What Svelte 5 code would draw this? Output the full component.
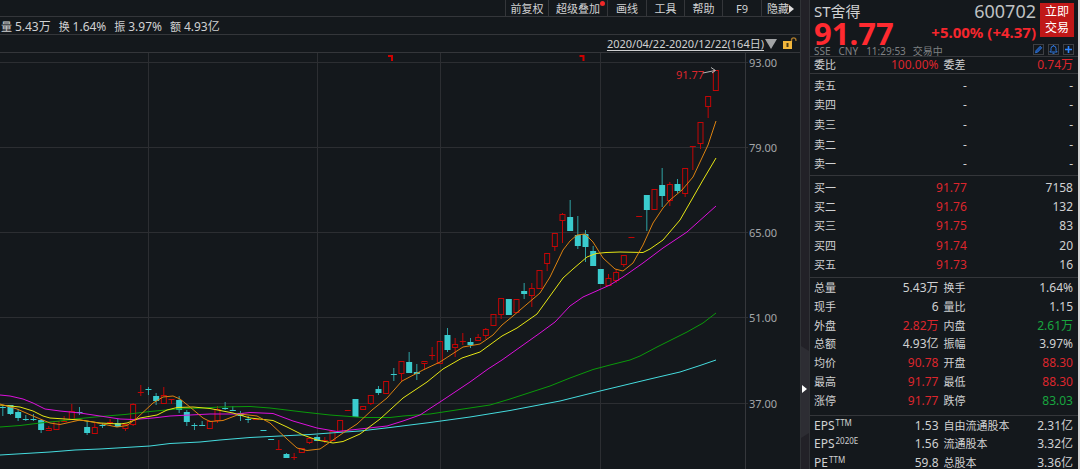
<script lang="ts">
  type Candle = [kind: string, high: number, top: number, bottom: number, low: number];

  const menu = ["前复权", "超级叠加", "画线", "工具", "帮助", "F9", "隐藏"];
  const widths = [43, 59, 39, 38, 38, 39, 38];

  const summary = [
    ["量", "5.43万"],
    ["换", "1.64%"],
    ["振", "3.97%"],
    ["额", "4.93亿"],
  ];

  const sells = ["卖五", "卖四", "卖三", "卖二", "卖一"];
  const buys = [
    ["买一", "91.77", "7158"],
    ["买二", "91.76", "132"],
    ["买三", "91.75", "83"],
    ["买四", "91.74", "20"],
    ["买五", "91.73", "16"],
  ];

  // label, value, tone, label, value, tone
  const stats = [
    ["总量", "5.43万", "", "换手", "1.64%", ""],
    ["现手", "6", "", "量比", "1.15", ""],
    ["外盘", "2.82万", "up", "内盘", "2.61万", "down"],
    ["总额", "4.93亿", "", "振幅", "3.97%", ""],
    ["均价", "90.78", "up", "开盘", "88.30", "up"],
    ["最高", "91.77", "up", "最低", "88.30", "up"],
    ["涨停", "91.77", "up", "跌停", "83.03", "down"],
  ];

  // label, superscript, value, label, value
  const ratios = [
    ["EPS", "TTM", "1.53", "自由流通股本", "2.31亿"],
    ["EPS", "2020E", "1.56", "流通股本", "3.32亿"],
    ["PE", "TTM", "59.8", "总股本", "3.36亿"],
  ];

  const levels = [
    [62.5, "93.00"],
    [147.5, "79.00"],
    [232.5, "65.00"],
    [317.5, "51.00"],
    [403.5, "37.00"],
  ] as [number, string][];
  const months = [148.5, 317.5, 440.5, 600.5];

  // u = hollow red, d = filled teal
  const candles: Candle[] = [
    ["d", 406, 407, 408, 416], ["d", 405, 405, 414, 415], ["d", 409, 412, 418, 421],
    ["d", 415, 419, 420, 421], ["d", 414, 419, 420, 421], ["d", 419, 420, 430, 433],
    ["u", 426, 428, 430, 430], ["u", 421, 421, 429, 429], ["u", 416, 421, 421, 422],
    ["u", 404, 411, 419, 419], ["d", 407, 412, 413, 415], ["d", 421, 427, 433, 435],
    ["u", 423, 427, 433, 433], ["d", 423, 425, 426, 428], ["u", 419, 422, 423, 426],
    ["d", 419, 423, 427, 427], ["u", 424, 424, 428, 431], ["u", 403, 404, 424, 426],
    ["u", 385, 392, 392, 396], ["d", 387, 389, 390, 395], ["d", 393, 396, 401, 405],
    ["u", 387, 395, 403, 403], ["u", 399, 399, 399, 404], ["d", 396, 400, 410, 413],
    ["d", 410, 412, 422, 426], ["d", 423, 425, 426, 430], ["d", 421, 425, 426, 426],
    ["u", 420, 421, 428, 428], ["u", 406, 409, 420, 423], ["d", 402, 408, 409, 410],
    ["d", 406, 410, 411, 411], ["d", 411, 413, 416, 421], ["d", 416, 419, 420, 423],
    ["u", 419, 419, 419, 419], ["d", 430, 430, 431, 431], ["d", 439, 439, 440, 440],
    ["u", 440, 449, 449, 449], ["d", 453, 454, 458, 458], ["u", 453, 457, 457, 460],
    ["u", 448, 448, 452, 452], ["u", 438, 438, 442, 444], ["d", 435, 437, 441, 441],
    ["u", 437, 440, 440, 443], ["u", 431, 431, 440, 440], ["u", 420, 420, 431, 431],
    ["u", 410, 410, 410, 410], ["d", 399, 399, 417, 417], ["u", 406, 406, 409, 409],
    ["u", 395, 395, 403, 405], ["d", 386, 389, 393, 395], ["u", 381, 381, 393, 393],
    ["d", 368, 374, 375, 381], ["u", 361, 361, 373, 381], ["d", 352, 362, 373, 373],
    ["d", 364, 372, 374, 380], ["u", 361, 361, 363, 370], ["u", 347, 355, 355, 360],
    ["u", 341, 341, 363, 363], ["d", 328, 335, 350, 352], ["u", 338, 344, 347, 357],
    ["u", 333, 341, 342, 345], ["d", 338, 342, 345, 348], ["u", 334, 337, 340, 341],
    ["u", 328, 329, 335, 339], ["u", 314, 314, 325, 325], ["u", 298, 298, 314, 319],
    ["d", 299, 299, 315, 315], ["u", 299, 299, 312, 313], ["d", 283, 291, 294, 299],
    ["u", 283, 288, 295, 307], ["u", 270, 270, 288, 288], ["u", 253, 253, 263, 271],
    ["u", 233, 233, 246, 251], ["u", 213, 214, 220, 243], ["d", 200, 217, 231, 231],
    ["d", 216, 235, 246, 249], ["d", 230, 234, 247, 262], ["d", 246, 251, 266, 266],
    ["d", 269, 269, 284, 284], ["u", 274, 278, 285, 286], ["u", 269, 272, 280, 283],
    ["u", 255, 255, 264, 267], ["u", 237, 237, 237, 237], ["u", 216, 216, 216, 216],
    ["d", 195, 195, 210, 231], ["u", 189, 189, 209, 209], ["d", 168, 185, 196, 207],
    ["u", 182, 184, 200, 206], ["d", 179, 184, 191, 193], ["u", 168, 168, 193, 197],
    ["u", 146, 146, 146, 170], ["u", 122, 122, 143, 149], ["u", 96, 96, 106, 118],
    ["u", 70, 70, 90, 90],
  ];
  const step = 7.667;
  const cx = (i: number) => 2.8 + i * step;

  const averages = [
    { color: "#45dcde", points: "0,455 25,453.5 50,452 75,450 100,449 125,447.5 150,446 170,443.5 200,442 220,440 250,437.5 280,436 310,434.5 330,433 360,431 390,427.5 430,422.5 470,417 510,410.5 560,401 600,391 650,379 680,372 700,365.5 716,360" },
    { color: "#0a9a0a", points: "0,427 20,425.5 40,423 60,421 75,419 100,416.5 125,414.5 150,411.5 177,409 203,408 220,407 250,406.5 270,408 303,412 330,415 350,416.5 363,417.5 390,417.5 403,416 430,414 463,409 490,405 510,399 550,386 570,378 593,369.5 610,365 630,360 640,356 657,347 687,332 703,323 716,313" },
    { color: "#dc10dc", points: "0,395 10,396 23,399 33,403 45,409 60,411 80,413 100,416 120,419 133,419.5 153,418 170,416 210,414 237,414 250,412.5 273,413.5 293,421 317,428 337,431.5 360,429 387,426 403,421 420,415 443,400 470,382 488,369 502,360 540,333 555,322 570,306 583,297 610,285 623,277 643,263 663,248 687,232 716,206" },
    { color: "#e6e614", points: "0,405 20,407 33,411 43,416 50,418 80,420 100,423 120,424 127,423 140,418 157,415 167,410 177,407.5 193,407 210,408.5 233,413 250,418 273,420.5 287,427 303,435 317,440 333,443 343,441.5 360,434 380,419 403,398 427,382 443,369 462,358 480,352 502,336 517,328 537,314 563,278 573,269 587,257 596,253.5 606,252.5 620,252 643,252.5 650,249 663,240 680,220 703,180 716,158" },
    { color: "#dc8210", points: "0,404 17,409 33,416 50,423 60,424.5 80,420 93,422 117,427 127,425.5 137,418 153,403 163,397 173,396 180,399 190,407 203,418 210,421.5 223,420.5 240,414 257,416 270,423 287,439 297,448 307,450.5 320,449 333,440 343,433 357,424 372,410 387,398 402,381 423,370 440,362 463,347 480,344 493,335 502,325 513,316 540,293 550,277 563,250 570,241 577,235 585,234 593,242 603,258 615,269 623,271 633,263 643,245 653,223 663,208 670,200 682,190 693,177 708,145 716,121" },
  ];
</script>

<div class="terminal">
  <main class="chart-pane">
    <nav class="toolbar">
      {#each menu as item, i}
        <button style="width: {widths[i]}px" class:has-dot={i === 1}>
          {item}{#if i === 6}<svg width="5" height="8" viewBox="0 0 5 8" aria-hidden="true"><path d="M0 0 5 4 0 8z" fill="#ddd" /></svg>{/if}
        </button>
      {/each}
    </nav>

    <div class="summary">
      {#each summary as [label, value]}
        <span>{label} <b>{value}</b></span>
      {/each}
    </div>

    <div class="range">
      <button class="dates">2020/04/22-2020/12/22(164日)</button>
      <svg width="12" height="10" viewBox="0 0 12 10" aria-hidden="true"><path d="M0 0H12L6 10z" fill="#a2a4a6" /></svg>
      <button class="lock" aria-label="解锁">
        <svg width="14" height="13" viewBox="0 0 14 13">
          <path d="M8.5 5V3a2.2 2.2 0 0 1 4.4 0v1" fill="none" stroke="#a9782a" stroke-width="1.3" />
          <rect y="4" width="9" height="8" fill="#f0b53c" />
          <path d="M3.5 6h2v4h-2z" fill="#4d3a14" />
        </svg>
      </button>
    </div>

    <svg class="chart" viewBox="0 53 800 416" role="img" aria-label="K线图">
      <g class="grid">
        {#each levels as [y]}
          <path d="M0 {y}H748" />
        {/each}
        {#each months as x}
          <path d="M{x} 53V469" />
        {/each}
      </g>
      <path class="axis" d="M745.5 53V469" />

      {#each candles as [kind, high, top, bottom, low], i}
        {#if kind === "d"}
          <g class="fall">
            <path d="M{cx(i)} {high}V{low}" />
            <rect x={cx(i) - 3} y={top} width="6" height={bottom - top} />
          </g>
        {:else}
          <g class="rise">
            {#if high < top}<path d="M{cx(i)} {high}V{top}" />{/if}
            {#if low > bottom}<path d="M{cx(i)} {bottom}V{low}" />{/if}
            {#if bottom - top < 2}
              <path d="M{cx(i) - 3} {top + 0.5}h6" />
            {:else}
              <rect x={cx(i) - 2.5} y={top + 0.5} width="5" height={bottom - top} />
            {/if}
          </g>
        {/if}
      {/each}

      {#each averages as line}
        <polyline points={line.points} stroke={line.color} />
      {/each}

      <path class="flag" d="M388 56h4v5M579.5 56h4v5" />
      <text class="peak" x="676" y="79">91.77</text>
      <path class="pointer" d="M703 73 715 70.500M711 67.500 715.500 70.500 712 73" />
      {#each levels as [y, label]}
        <text class="level" x="749" y={y + 4}>{label}</text>
      {/each}
    </svg>
  </main>

  <div class="splitter">
    <button aria-label="收起"></button>
  </div>

  <aside class="quote">
    <header>
      <div class="name">
        <h1>ST舍得</h1>
        <strong>91.77</strong>
      </div>
      <div class="change">
        <span class="code">600702</span>
        <b>+5.00% (+4.37)</b>
      </div>
      <button class="trade">立即<br />交易</button>
    </header>
    <div class="status">
      <span>SSE</span><span>CNY</span><span>11:29:53</span><span>交易中</span>
      <div class="tools">
        <button aria-label="编辑"><svg width="9" height="9" viewBox="0 0 9 9"><path d="M1.500 7.800 2 5.600 6.200 1.200 7.800 2.800 3.600 7.200z" fill="#1d4f9e" stroke="#2f78e0" stroke-width=".8" /></svg></button>
        <button aria-label="提醒"><svg width="9" height="9" viewBox="0 0 9 9"><path d="M.8 7h7.400L7 5.500V3.500a2.500 2.500 0 0 0-5 0v2zM3.500 8.300h2M4.500 0v1" fill="none" stroke="#2f78e0" /></svg></button>
        <button aria-label="添加"><svg width="9" height="9" viewBox="0 0 9 9"><path d="M4.500 1v7M1 4.500h7" stroke="#2f86ff" stroke-width="1.600" /></svg></button>
      </div>
    </div>

    <table class="pairs ratio">
      <tbody>
        <tr><th>委比</th><td class="up">100.00%</td><th>委差</th><td class="up">0.74万</td></tr>
      </tbody>
    </table>

    <table class="book sell">
      <tbody>
        {#each sells as label}
          <tr><th>{label}</th><td>-</td><td>-</td></tr>
        {/each}
      </tbody>
    </table>

    <table class="book buy">
      <tbody>
        {#each buys as [label, price, volume]}
          <tr><th>{label}</th><td class="up">{price}</td><td>{volume}</td></tr>
        {/each}
      </tbody>
    </table>

    <table class="pairs stats">
      <tbody>
        {#each stats as [l1, v1, t1, l2, v2, t2]}
          <tr><th>{l1}</th><td class={t1}>{v1}</td><th>{l2}</th><td class={t2}>{v2}</td></tr>
        {/each}
      </tbody>
    </table>

    <table class="pairs basics">
      <tbody>
        {#each ratios as [l1, sup, v1, l2, v2]}
          <tr><th>{l1}<sup>{sup}</sup></th><td>{v1}</td><th>{l2}</th><td>{v2}</td></tr>
        {/each}
      </tbody>
    </table>
  </aside>
</div>

<style>
  :global(body) { background: #14181c; overflow: hidden; }

  .terminal {
    display: flex;
    min-height: 100vh;
    background: #14181c;
    color: #d0d1d2;
    font-family: "Noto Sans", "Noto Sans CJK SC", sans-serif;
    font-size: 11px;
    line-height: 16px;
    border-right: 2px solid #d4d4d4;
    box-sizing: border-box;
  }
  button {
    padding: 0; border: 0; background: none;
    color: inherit; font: inherit; cursor: pointer;
  }

  .chart-pane { flex: 1; min-width: 0; }

  .toolbar {
    display: flex; justify-content: flex-end;
    height: 16px; padding-right: 1px;
    line-height: 17px;
    border-bottom: 1px solid #34363a;
  }
  .toolbar button {
    position: relative;
    box-sizing: border-box;
    border-left: 1px solid #34363a;
    white-space: nowrap;
  }
  .has-dot::after {
    content: "";
    position: absolute; top: 1px; right: 2px;
    width: 5px; height: 5px; border-radius: 50%;
    background: #f02828;
  }

  .summary {
    display: flex; gap: 8px;
    height: 17px; padding-left: 1px;
    line-height: 19px;
    border-bottom: 1px solid #34363a;
  }
  .summary b { font-size: 12px; font-weight: 400; }

  .range {
    display: flex; align-items: center; justify-content: flex-end;
    height: 17px; padding-right: 3px;
    border-bottom: 1px solid #34363a;
  }
  .dates { text-decoration: underline; text-underline-offset: 2px; margin-right: 1px; }
  .lock { display: flex; margin-left: 6px; }

  .chart { display: block; width: 100%; }
  .grid path { stroke: #2c2e32; }
  .axis { stroke: #35373b; }
  .fall path { stroke: #2fa3a5; }
  .fall rect { fill: #3accce; }
  .rise path, .rise rect { fill: none; stroke: #c40606; }
  polyline { fill: none; stroke-width: 1; }
  .flag { fill: none; stroke: #d00000; stroke-width: 2; }
  .pointer { fill: none; stroke: #b4b4b4; }
  .chart text { font-size: 11px; fill: #a4a7aa; }
  .chart .peak { fill: #dc262d; }

  .splitter {
    display: flex; align-items: flex-end;
    width: 8px;
    background: #222127;
    border-left: 1px solid #303236;
  }
  .splitter button {
    display: flex; align-items: center;
    width: 8px; height: 92px; margin-bottom: 34px;
    background: #2d2d33;
    clip-path: polygon(0 0, 100% 5px, 100% 87px, 0 100%);
  }
  .splitter button::after {
    content: "";
    margin: -6px 0 0 1px;
    border-left: 5px solid #fff;
    border-top: 4px solid transparent;
    border-bottom: 4px solid transparent;
  }

  .quote {
    width: 268px;
    border-left: 1px solid #303236;
  }
  header { display: flex; height: 44px; padding: 0 4px; }
  .name { flex: 1; }
  h1 { margin: 0; font-size: 15px; font-weight: 400; line-height: 22px; }
  .name strong {
    display: block;
    font-size: 31px; line-height: 22px;
    color: #ff2a30;
  }
  .change {
    display: flex; flex-direction: column; align-items: flex-end;
    margin-right: 4px;
    color: #f5262d;
    font-size: 15px; line-height: 18px;
  }
  .code { color: #bfc1c3; font-size: 18px; line-height: 23px; }
  .trade {
    width: 34px; height: 34px; margin-top: 3px;
    background: #c01818;
    color: #fff;
    font-size: 12px; line-height: 16px;
  }

  .status {
    display: flex; gap: 7px;
    height: 12px; padding: 0 4px;
    border-bottom: 1px solid #34363a;
    color: #7f8183;
    font-size: 10px; line-height: 14px;
  }
  .status > span:nth-child(-n + 2) { margin-right: 1px; }
  .tools { display: flex; align-items: flex-start; gap: 4px; margin-left: auto; }
  .tools button {
    display: flex;
    border: 1px solid #3e4044;
  }

  table {
    width: 100%;
    padding: 0 5px 0 4px;
    border-spacing: 0;
    border-bottom: 1px solid #34363a;
    table-layout: fixed;
    box-sizing: border-box;
    font-size: 12px; line-height: 16px;
  }
  th, td { padding: 0; text-align: right; white-space: nowrap; }
  th { text-align: left; font-size: 11px; font-weight: 400; }
  .up { color: #dc262d; }
  .down { color: #18a53f; }

  .book th { width: 20%; }
  .book td:nth-child(2) { width: 39%; }
  .pairs th:nth-child(1) { width: 20%; }
  .pairs td:nth-child(2) { width: 29%; }
  .pairs th:nth-child(3) { width: 28%; padding-left: 5px; }
  .pairs td:nth-child(4) { width: 23%; }

  .ratio { height: 17px; }
  .sell { height: 102px; padding-top: 2px; padding-bottom: 1px; }
  .buy { height: 102px; padding-top: 2px; padding-bottom: 2px; }
  .stats { height: 138px; padding-top: 1px; padding-bottom: 5px; }
  .basics { height: 56px; padding-top: 1px; border-bottom: 0; }
  .basics th:first-child { font-size: 12px; }
  sup { margin-left: 1px; font-size: 8px; line-height: 8px; vertical-align: 4px; }
</style>
